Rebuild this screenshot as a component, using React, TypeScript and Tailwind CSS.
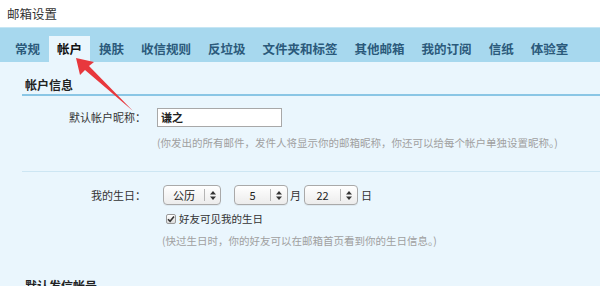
import React from "react"

const tabs = ["常规", "帐户", "换肤", "收信规则", "反垃圾", "文件夹和标签", "其他邮箱", "我的订阅", "信纸", "体验室"]

const font = { fontFamily: '"Noto Sans CJK SC", "Microsoft YaHei", sans-serif' }

function Arrows() {
  return (
    <svg width="6" height="9" viewBox="0 0 6 9" className="fill-[#333]">
      <path d="M3 0 L6 3.5 L0 3.5 Z" />
      <path d="M0 5.5 L6 5.5 L3 9 Z" />
    </svg>
  )
}

function FakeSelect({ value, width, textWidth }: { value: string; width: string; textWidth: string }) {
  return (
    <div
      className={`${width} h-[20px] flex items-center rounded-[4px] border border-[#a9a9a9] bg-gradient-to-b from-white to-[#ececec] shadow-[0_1px_0_rgba(0,0,0,0.05)]`}
    >
      <span className={`${textWidth} text-center text-[11px] leading-[18px] text-[#222]`}>{value}</span>
      <span className="h-[12px] w-px bg-[#b5b5b5]" />
      <span className="flex-1 flex items-center justify-center">
        <Arrows />
      </span>
    </div>
  )
}

export default function App() {
  return (
    <div className="relative w-[600px] h-[286px] overflow-hidden bg-white flex flex-col" style={font}>
      {/* Title */}
      <div className="h-[27px] shrink-0 pl-[7px] pt-[2px] flex items-center text-[12.5px] text-[#333]">邮箱设置</div>

      {/* Tabs */}
      <div className="h-[35px] shrink-0 bg-[#a7d8ee] border-t border-[#c6e6f4] flex items-end pl-[7px] gap-px">
        {tabs.map((tab) => {
          const active = tab === "帐户"
          return (
            <div
              key={tab}
              className={`h-[26px] px-[8px] flex items-center text-[12.5px] font-bold leading-none ${
                active ? "bg-[#eaf6fd] text-[#111]" : "text-[#2b5a7b]"
              }`}
            >
              {tab}
            </div>
          )
        })}
      </div>

      {/* Content */}
      <div className="flex-1 bg-[#eaf6fd] pl-[22px]">
        <div className="pt-[13px] pb-px leading-[16px] border-b-2 border-[#8ac6e5]">
          <span className="pl-[3px] text-[12px] font-bold text-[#222]">帐户信息</span>
        </div>

        <div className="mt-[12px] flex items-center">
          <div className="w-[124px] text-right text-[11px] text-[#333]">默认帐户昵称：</div>
          <div className="ml-[11px] w-[125px] h-[19px] border border-[#a8a8a8] bg-white flex items-center pl-[3px] text-[11px] font-bold text-[#222]">
            谦之
          </div>
        </div>
        <div className="mt-[8px] ml-[135px] leading-[16px] text-[10.5px] text-[#a0a0a0] whitespace-nowrap">
          (你发出的所有邮件，发件人将显示你的邮箱昵称，你还可以给每个帐户单独设置昵称。)
        </div>

        <div className="mt-[20px] border-t border-[#cde6f3]" />

        <div className="mt-[13px] flex items-center">
          <div className="w-[124px] text-right text-[11px] text-[#333]">我的生日：</div>
          <div className="ml-[17px]">
            <FakeSelect value="公历" width="w-[58px]" textWidth="w-[40px]" />
          </div>
          <div className="ml-[13px]">
            <FakeSelect value="5" width="w-[54px]" textWidth="w-[35px]" />
          </div>
          <span className="ml-[2px] text-[11px] text-[#333]">月</span>
          <div className="ml-[3px]">
            <FakeSelect value="22" width="w-[54px]" textWidth="w-[35px]" />
          </div>
          <span className="ml-[3px] text-[11px] text-[#333]">日</span>
        </div>

        <div className="mt-[6px] ml-[144px] h-[16px] flex items-center gap-[3px]">
          <span className="w-[10px] h-[10px] rounded-[2px] border border-[#9a9a9a] bg-gradient-to-b from-white to-[#dcdcdc] flex items-center justify-center">
            <svg width="8" height="8" viewBox="0 0 8 8">
              <path d="M1 4.2 L3.1 6.3 L7 1.6" stroke="#333" strokeWidth="1.6" fill="none" />
            </svg>
          </span>
          <span className="text-[10.5px] text-[#333]">好友可见我的生日</span>
        </div>
        <div className="mt-[6px] ml-[140px] leading-[16px] text-[10.5px] text-[#a0a0a0] whitespace-nowrap">
          (快过生日时，你的好友可以在邮箱首页看到你的生日信息。)
        </div>

        <div className="mt-[29px] pl-[3px] leading-[16px] text-[12px] font-bold text-[#222]">默认发信帐号</div>
      </div>

      {/* Red pointer arrow */}
      <svg className="absolute left-0 top-0 pointer-events-none" width="600" height="286">
        <polygon points="76,58 94,62 89,66 133,111 85,70 80,75" fill="#e8383d" />
      </svg>
    </div>
  )
}
